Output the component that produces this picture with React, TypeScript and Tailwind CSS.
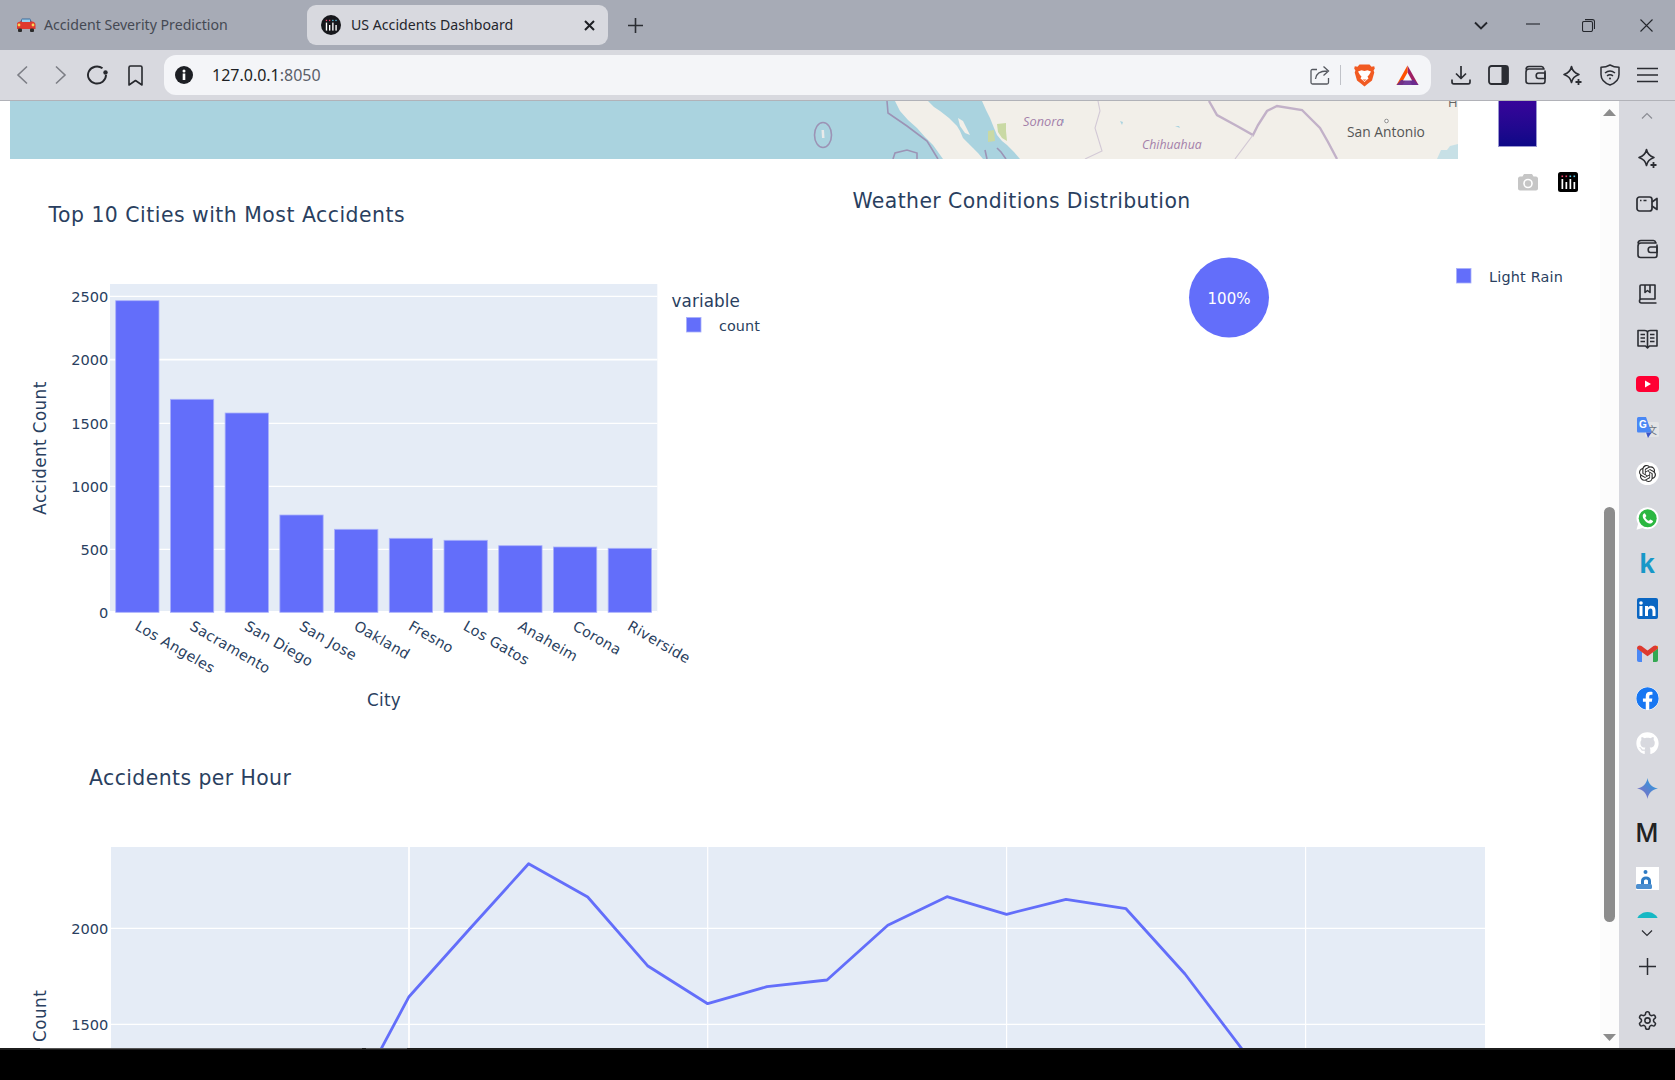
import React from "react";
import { FaFacebook, FaGithub } from "react-icons/fa";
import { SiOpenai } from "react-icons/si";

const BAR = "#636efa";
const cities = ["Los Angeles","Sacramento","San Diego","San Jose","Oakland","Fresno","Los Gatos","Anaheim","Corona","Riverside"];
const barTops = [300.7,399.3,413,515,529.3,538.3,540.3,545.7,547,548.3];
const yTicks: [string, number][] = [["2500",296.3],["2000",359.7],["1500",423.3],["1000",486.3],["500",549.3],["0",612.3]];
const linePts = "349,1109 409,996.7 468.7,930 528.6,863.7 587.7,897 647.5,965.7 707.7,1003.7 767,986.7 827,980 887.8,925.3 947,896.7 1006.6,914.3 1066,899.3 1126,908.7 1185,974 1245,1053";

function Star({ size = 21 }: { size?: number }) {
  return (
    <svg width={size} height={size} viewBox="0 0 21 21" fill="none" stroke="#2b2d33" strokeWidth="1.6" strokeLinejoin="round">
      <path d="M9.5 1.5C10.3 5.6 12.6 8 17 9.5 12.6 11 10.3 13.4 9.5 17.5 8.7 13.4 6.4 11 2 9.5 6.4 8 8.7 5.6 9.5 1.5Z" />
      <path d="M16.5 14v6M13.5 17h6" strokeWidth="1.8" />
    </svg>
  );
}

function WalletIcon() {
  return (
    <svg width="21" height="20" viewBox="0 0 21 20" fill="none" stroke="#2b2d33" strokeWidth="1.6" strokeLinejoin="round">
      <path d="M1 4.5C1 2.5 2 1.5 4 1.5H16.5C18 1.5 18.5 2.5 19 4H4C2 4 1 5 1 7V16C1 17.5 2 18.5 3.5 18.5H18C19.5 18.5 20 17.5 20 16V5.5" />
      <path d="M20 8H13.5C12 8 11.2 9 11.2 10.7S12 13.5 13.5 13.5H20Z" />
    </svg>
  );
}

function PlotlyBars() {
  return (
    <g>
      {[3.5, 7.5, 11.5, 15.5].map((x, i) => (
        <g key={x}>
          <rect x={x} y="3.5" width="1.6" height="1.6" fill={i < 2 ? "#ef476f" : "#5cc8e8"} />
          <rect x={x} y={i % 2 ? 10 : 7} width="1.7" height={i % 2 ? 7 : 10} fill="#fff" />
        </g>
      ))}
    </g>
  );
}

function Car() {
  return (
    <svg width="20" height="16" viewBox="0 0 20 16">
      <path d="M4 5 6 1.5H14L16 5Z" fill="#3d6d9c" />
      <path d="M1 7C1 5.5 2.5 4.5 5 4.5H16C18 4.5 19.5 6 19.5 8V12H1Z" fill="#e0392e" />
      <rect x="6" y="2.5" width="8" height="2.5" fill="#9bd0ee" />
      <circle cx="3" cy="8" r="1.4" fill="#f7d658" />
      <circle cx="17" cy="8" r="1.4" fill="#f7d658" />
      <rect x="2" y="11.5" width="4" height="3.5" rx="1" fill="#2b2b2b" />
      <rect x="14" y="11.5" width="4" height="3.5" rx="1" fill="#2b2b2b" />
    </svg>
  );
}

function Brave() {
  return (
    <svg width="21" height="23" viewBox="0 0 21 23">
      <path d="M5.5 0.5H15.5L17.5 2.8 20.2 2.2 20.8 4.5 19.6 6.5 20.3 8.5 18 16.5 13.5 20 10.5 22.5 7.5 20 3 16.5 0.7 8.5 1.4 6.5 0.2 4.5 0.8 2.2 3.5 2.8Z" fill="#f15a22" />
      <path d="M4 7.5 7.5 6.2 10.5 7 13.5 6.2 17 7.5 15 11 13.5 12.5 14.5 14.5 12 16.5 10.5 18 9 16.5 6.5 14.5 7.5 12.5 6 11Z" fill="#fff" />
      <path d="M8.5 15.5H12.5L10.5 17Z" fill="#f15a22" />
    </svg>
  );
}

function Bat() {
  return (
    <svg width="23" height="21" viewBox="0 0 23 21">
      <path d="M11.5 0.5 22.5 20H16L11.5 12Z" fill="#9e1f63" />
      <path d="M11.5 0.5 0.5 20H6.5L11.5 12Z" fill="#ff5000" />
      <path d="M0.5 20 5 15 18 15 22.5 20Z" fill="#662d91" opacity="0.92" />
      <path d="M11.5 7.5 16 15.5H7Z" fill="#f4f5f8" />
    </svg>
  );
}

function GTranslate() {
  return (
    <svg width="23" height="23" viewBox="0 0 23 23">
      <rect x="9" y="5" width="14" height="15" rx="1.5" fill="#e3e4e6" />
      <text x="16" y="17" textAnchor="middle" fill="#6a7280" className="font-['Noto_Sans_CJK_SC'] text-[10px]">文</text>
      <path d="M1 1.5C1 0.8 1.6 0 2.5 0H10L15.5 15.5H2.5C1.6 15.5 1 15 1 14Z" fill="#4a88f5" />
      <path d="M10 15.5H15.5L12 21Z" fill="#3c55c8" />
      <text x="7" y="11" textAnchor="middle" fill="#fff" className="font-['Liberation_Sans'] font-bold text-[10px]">G</text>
    </svg>
  );
}

function Gmail() {
  return (
    <svg width="21" height="17" viewBox="0 0 21 17">
      <path d="M0 3V15C0 16 .7 17 2 17H5V7Z" fill="#4a88f5" />
      <path d="M21 3V15C21 16 20.3 17 19 17H16V7Z" fill="#34a853" />
      <path d="M16 2 21 0.8V3.5L16 7Z" fill="#fbbc04" />
      <path d="M0 3.5C0 1 2.5-.5 4.5 1L10.5 5.5 16.5 1C18.5-.5 21 1 21 3.5L16 7.2 10.5 11.2 5 7.2Z" fill="#dd3a30" />
    </svg>
  );
}

function WhatsApp() {
  return (
    <svg width="23" height="23" viewBox="0 0 23 23">
      <path d="M11.5.3a11 11 0 0 1 0 22c-1.800 0-3.500-.4-5-1.200L.5 22.700l1.600-5.800a11 11 0 0 1 9.400-16.600Z" fill="#fff" />
      <circle cx="11.700" cy="11.300" r="9" fill="#2bb741" />
      <path d="M8.500 6.200c-.5 0-1.700.9-1.800 2.600-.1 2 1.300 4 3 5.600 1.800 1.600 3.700 2.400 5.200 2 1.300-.3 2.300-1.500 2.200-2.300-.1-.4-2.300-1.600-2.800-1.600-.5.100-1 1.300-1.500 1.300-1 0-3.300-2.300-3.500-3.300 0-.5 1-1.100 1-1.600S9 6.200 8.500 6.200Z" fill="#fff" />
    </svg>
  );
}

function SideItem({ children }: { children: React.ReactNode }) {
  return <div className="h-[45px] w-full shrink-0 flex items-center justify-center">{children}</div>;
}

function Sidebar() {
  return (
    <div className="w-[56px] h-full bg-[#d8d9df] flex flex-col items-center">
      <div className="h-[30px] flex items-center">
        <svg width="12" height="8" viewBox="0 0 12 8" fill="none" stroke="#8b8d94" strokeWidth="1.2"><path d="M1 6.500 6 1.500l5 5" /></svg>
      </div>
      <div className="mt-[5px] h-[782px] w-full overflow-hidden flex flex-col">
        <SideItem><Star /></SideItem>
        <SideItem>
          <svg width="22" height="16" viewBox="0 0 22 16" fill="none" stroke="#2b2d33" strokeWidth="1.7" strokeLinejoin="round">
            <rect x="1" y="1" width="15" height="14" rx="2.500" />
            <path d="M16 6l5-3.500v11L16 10" />
            <path d="M4 4.500h1.500M7.500 4.500h3" strokeWidth="1.400" />
          </svg>
        </SideItem>
        <SideItem><WalletIcon /></SideItem>
        <SideItem>
          <svg width="19" height="20" viewBox="0 0 19 20" fill="none" stroke="#2b2d33" strokeWidth="1.600" strokeLinejoin="round">
            <path d="M2 16V2C2 1.300 2.500 1 3 1H17V15H3.500C2.500 15 1.500 15.700 1.500 17S2.500 19 3.500 19H18.500" />
            <path d="M7 1V8.500L9.500 6.500 12 8.500V1" />
          </svg>
        </SideItem>
        <SideItem>
          <svg width="21" height="20" viewBox="0 0 21 20" fill="none" stroke="#2b2d33" strokeWidth="1.600" strokeLinejoin="round">
            <path d="M1 1.500H7.500C9 1.500 10.500 2 10.500 3.500 10.500 2 12 1.500 13.500 1.500H20V17H12.500L10.500 19 8.500 17H1ZM10.500 3.500V18" />
            <path d="M3.500 5.500H8M3.500 9H8M3.500 12.500H8M13 5.500H17.500M13 9H17.500M13 12.500H17.500" strokeWidth="1.400" />
          </svg>
        </SideItem>
        <SideItem>
          <svg width="23" height="16" viewBox="0 0 23 16"><rect width="23" height="16" rx="4" fill="#ff0033" /><path d="M9 4.500v7l6-3.500Z" fill="#fff" /></svg>
        </SideItem>
        <SideItem><GTranslate /></SideItem>
        <SideItem>
          <div className="w-[23px] h-[23px] rounded-full bg-white flex items-center justify-center">
            <SiOpenai size={17} color="#2a2a2a" />
          </div>
        </SideItem>
        <SideItem><WhatsApp /></SideItem>
        <SideItem><span className="font-['Liberation_Sans'] font-bold text-[28px] leading-none text-[#1798c8]">k</span></SideItem>
        <SideItem>
          <div className="w-[21px] h-[21px] rounded-[2px] bg-[#0a66c2] flex items-center justify-center">
            <svg width="17" height="15" viewBox="0 0 17 15" fill="#fff"><circle cx="2" cy="2" r="1.800" /><rect x=".5" y="5" width="3" height="10" /><path d="M6 5h3v1.400C9.700 5.400 10.800 4.800 12.300 4.800 15.300 4.800 16.500 6.700 16.500 9.800V15h-3V10.300C13.500 8.700 13 7.500 11.500 7.500S9 8.700 9 10.300V15H6Z" /></svg>
          </div>
        </SideItem>
        <SideItem><Gmail /></SideItem>
        <SideItem><FaFacebook size={23} color="#1877f2" className="bg-white rounded-full" /></SideItem>
        <SideItem><FaGithub size={23} color="#ffffff" /></SideItem>
        <SideItem>
          <svg width="21" height="21" viewBox="0 0 21 21">
            <defs>
              <linearGradient id="gem" x1="0" y1="1" x2="1" y2="0">
                <stop offset="0" stopColor="#9168c0" />
                <stop offset="0.5" stopColor="#5684d1" />
                <stop offset="1" stopColor="#1ba1e3" />
              </linearGradient>
            </defs>
            <path d="M10.500 0C11.300 5.500 15 9.500 21 10.500 15 11.500 11.300 15.500 10.500 21 9.700 15.500 6 11.500 0 10.500 6 9.500 9.700 5.500 10.500 0Z" fill="url(#gem)" />
          </svg>
        </SideItem>
        <SideItem><span className="font-['Inter'] font-medium text-[25px] leading-none text-[#222]">M</span></SideItem>
        <SideItem>
          <div className="w-[23px] h-[23px] bg-white">
            <svg width="23" height="23" viewBox="0 0 23 23">
              <circle cx="9.500" cy="5" r="2" fill="#2f7cc4" />
              <path d="M5 17V14C5 11 7 9.500 10 9.500S15 11 15 14V17H12V14C12 13 11 12.500 10 12.500S8 13 8 14V17Z" fill="#2f7cc4" />
              <rect y="17" width="16" height="5" rx="1.500" fill="#4c8fd0" />
            </svg>
          </div>
        </SideItem>
        <SideItem><div className="w-[23px] h-[23px] rounded-full bg-[#16b8c4]" /></SideItem>
      </div>
      <div className="h-[30px] flex items-center">
        <svg width="12" height="8" viewBox="0 0 12 8" fill="none" stroke="#2b2d33" strokeWidth="1.200"><path d="M1 1.500l5 5 5-5" /></svg>
      </div>
      <div className="h-[36px] flex items-center">
        <svg width="17" height="17" viewBox="0 0 17 17" stroke="#2b2d33" strokeWidth="1.500"><path d="M8.500 0v17M0 8.500h17" /></svg>
      </div>
      <div className="flex-1 pt-[8px] flex items-center">
        <svg width="21" height="21" viewBox="0 0 24 24" fill="none" stroke="#2b2d33" strokeWidth="1.800" strokeLinejoin="round">
          <path d="M12.220 2h-.44a2 2 0 0 0-2 2v.18a2 2 0 0 1-1 1.730l-.43.25a2 2 0 0 1-2 0l-.15-.08a2 2 0 0 0-2.730.73l-.22.380a2 2 0 0 0 .730 2.730l.150.100a2 2 0 0 1 1 1.720v.510a2 2 0 0 1-1 1.740l-.150.090a2 2 0 0 0-.730 2.730l.220.380a2 2 0 0 0 2.730.730l.150-.080a2 2 0 0 1 2 0l.430.250a2 2 0 0 1 1 1.730V20a2 2 0 0 0 2 2h.440a2 2 0 0 0 2-2v-.180a2 2 0 0 1 1-1.730l.430-.250a2 2 0 0 1 2 0l.150.080a2 2 0 0 0 2.730-.730l.220-.390a2 2 0 0 0-.730-2.730l-.150-.080a2 2 0 0 1-1-1.740v-.500a2 2 0 0 1 1-1.740l.150-.090a2 2 0 0 0 .730-2.730l-.220-.380a2 2 0 0 0-2.730-.730l-.150.080a2 2 0 0 1-2 0l-.430-.250a2 2 0 0 1-1-1.730V4a2 2 0 0 0-2-2Z" />
          <circle cx="12" cy="12" r="3" />
        </svg>
      </div>
    </div>
  );
}

function Scrollbar() {
  return (
    <div className="w-[19px] h-full bg-[#fcfcfc] flex flex-col">
      <div className="h-[405.5px] pt-[8px] pl-[3px]">
        <svg width="13" height="7" viewBox="0 0 13 7" className="block"><path d="M6.500 0 13 7H0Z" fill="#8c8c8c" /></svg>
      </div>
      <div className="ml-[4px] w-[11px] h-[415px] rounded-[6px] bg-[#8c8c8c]" />
      <div className="flex-1 flex flex-col justify-end pb-[7px] pl-[3px]">
        <svg width="13" height="7" viewBox="0 0 13 7" className="block"><path d="M6.500 7 13 0H0Z" fill="#8c8c8c" /></svg>
      </div>
    </div>
  );
}

function MapStrip() {
  return (
    <svg width="1448" height="58" viewBox="10 101 1448 58" className="block">
      <rect x="10" y="101" width="1448" height="58" fill="#aad3df" />
      <g className="blur-[0.6px]">
        <path d="M982 101L986 110 990 118 994 128 997 135 1002 141 1007 145 1014 152 1020 159H1458V101Z" fill="#f2efe9" />
        <path d="M895 101L900 111 908 120 917 128 925 137 933 145 943 159H983L978 153 973 148 968 143 963 138 960 131 957 126 949 118 940 111 934 107 928 101Z" fill="#f2efe9" />
        <path d="M958 118L963 121 968 131 970 135 965 133 960 126Z" fill="#f2efe9" />
        <path d="M988 131L994 130 995 141 988 142Z" fill="#c9d9a4" />
        <path d="M997 124L1006 123 1006 131 1007 141 1002 138 998 132Z" fill="#c9d9a4" />
        <path d="M1437 159L1441 150 1447 150 1450 146 1458 144V159Z" fill="#c7e0e6" />
        <g fill="none" stroke="#9c93b5" strokeWidth="1.600">
          <path d="M887 101L888 113 907 126 927 141 938 159" />
          <ellipse cx="823" cy="135" rx="8.500" ry="12.500" />
          <path d="M893 159L895 153 907 150 917 153 917 159" />
          <path d="M985 150L987 159M997 148L1001 152 1006 159" />
        </g>
        <path d="M821.500 130h2.500l.5 8h-2.500Z" fill="#e8eaea" />
        <path d="M1098 101L1100 111 1095 128 1102 151 1085 159" fill="none" stroke="#d3c9d6" strokeWidth="1.100" />
        <path d="M1209 101L1217 115 1237 126 1253 135 1258 125 1267 111 1277 106 1302 110 1320 128 1328 142 1337 159" fill="none" stroke="#c2b1c8" strokeWidth="2.400" />
        <path d="M1253 135L1235 159" fill="none" stroke="#d2c8d4" strokeWidth="1.200" />
        <path d="M1120 121l2 4 1-3ZM1062 119h2v4h-2ZM1175 126l5 2-1-2ZM1061 127l4 2" fill="#aad3df" />
      </g>
      <g className="font-['Open_Sans'] italic font-medium" fill="#a47fa9">
        <text x="1023" y="125.500" className="text-[12.800px]">Sonora</text>
        <text x="1142" y="149" className="text-[12.300px]">Chihuahua</text>
      </g>
      <circle cx="1386.500" cy="121" r="1.800" fill="#fff" stroke="#666" strokeWidth="0.700" />
      <text x="1347" y="137" fill="#555" className="font-['Open_Sans'] text-[13.800px]">San Antonio</text>
      <text x="1448" y="106.500" fill="#666" className="font-['Open_Sans'] text-[13px]">H</text>
    </svg>
  );
}

function BarChart() {
  return (
    <svg width="800" height="581" viewBox="0 159 800 581" className="block shrink-0 font-['DejaVu_Sans',sans-serif]">
      <text x="48.500" y="222" fill="#2a3f5f" className="text-[20.400px] tracking-[0.5px]">Top 10 Cities with Most Accidents</text>
      <rect x="110" y="284" width="547.300" height="328.300" fill="#e5ecf6" />
      {yTicks.map(([label, y]) => (
        <g key={label}>
          <line x1="110" x2="657.300" y1={y} y2={y} stroke="#fff" strokeWidth={label === "0" ? 2.400 : label === "2000" ? 1.800 : 1.200} />
          <text x="108.300" y={y + 5.300} textAnchor="end" fill="#2a3f5f" className="text-[14.600px]">{label}</text>
        </g>
      ))}
      {barTops.map((top, i) => (
        <rect key={i} x={115.700 + i * 54.720} y={top} width="43.300" height={612.300 - top} fill={BAR} stroke="#a9b0fb" strokeWidth="0.800" />
      ))}
      {cities.map((c, i) => (
        <text key={c} transform={`translate(${134 + i * 54.720} 629) rotate(30)`} fill="#2a3f5f" className="text-[14.400px] tracking-[0.3px]">{c}</text>
      ))}
      <text x="384" y="706" textAnchor="middle" fill="#2a3f5f" className="text-[16.800px] tracking-[0.3px]">City</text>
      <text transform="translate(46 448) rotate(-90)" textAnchor="middle" fill="#2a3f5f" className="text-[16.800px] tracking-[0.4px]">Accident Count</text>
      <text x="671.500" y="306.500" fill="#2a3f5f" className="text-[16.800px] tracking-[0.1px]">variable</text>
      <rect x="686.500" y="317.500" width="14.500" height="14.500" fill={BAR} stroke="#a9b0fb" strokeWidth="0.800" />
      <text x="719" y="331" fill="#2a3f5f" className="text-[14.400px] tracking-[0.05px]">count</text>
    </svg>
  );
}

function PieChart() {
  return (
    <svg width="800" height="581" viewBox="800 159 800 581" className="block shrink-0 font-['DejaVu_Sans',sans-serif]">
      <text x="852.500" y="208" fill="#2a3f5f" className="text-[20.400px] tracking-[0.4px]">Weather Conditions Distribution</text>
      <circle cx="1229" cy="297.500" r="40" fill={BAR} />
      <text x="1229" y="304" textAnchor="middle" fill="#fff" className="text-[15px]">100%</text>
      <rect x="1456.500" y="268.500" width="14.500" height="14.500" fill={BAR} stroke="#a9b0fb" strokeWidth="0.800" />
      <text x="1489" y="282" fill="#2a3f5f" className="text-[14.400px] tracking-[0.2px]">Light Rain</text>
      <g transform="translate(1518 173.500)" fill="#c6c6c6">
        <path d="M6 0.500H14L15.500 3H18C19 3 20 4 20 5V15C20 16 19 17 18 17H2C1 17 0 16 0 15V5C0 4 1 3 2 3H4.500Z" />
        <circle cx="10" cy="10" r="4.800" fill="#fff" />
        <circle cx="10" cy="10" r="3.200" />
      </g>
      <g transform="translate(1558 172)">
        <rect width="20" height="20" rx="2.500" fill="#000" />
        <PlotlyBars />
      </g>
    </svg>
  );
}

function LineChart() {
  return (
    <svg width="1600" height="308" viewBox="0 740 1600 308" className="block shrink-0 font-['DejaVu_Sans',sans-serif]">
      <text x="89" y="785" fill="#2a3f5f" className="text-[20.400px] tracking-[0.42px]">Accidents per Hour</text>
      <rect x="111" y="847" width="1374" height="201" fill="#e5ecf6" />
      {[928.300, 1024.300].map((y) => (
        <line key={y} x1="111" x2="1485" y1={y} y2={y} stroke="#fff" strokeWidth="1.300" />
      ))}
      {[409, 707.700, 1006.600, 1305.600].map((x, i) => (
        <line key={x} x1={x} x2={x} y1="847" y2="1048" stroke="#fff" strokeWidth={i === 0 ? 1.800 : 1.200} />
      ))}
      <polyline points={linePts} fill="none" stroke={BAR} strokeWidth="2.800" strokeLinejoin="round" />
      <text x="108.300" y="933.500" textAnchor="end" fill="#2a3f5f" className="text-[14.600px]">2000</text>
      <text x="108.300" y="1029.500" textAnchor="end" fill="#2a3f5f" className="text-[14.600px]">1500</text>
      <text transform="translate(46 1042) rotate(-90)" fill="#2a3f5f" className="text-[16.800px] tracking-[0.5px]">Count</text>
    </svg>
  );
}

export default function App() {
  return (
    <div className="w-[1675px] h-[1080px] overflow-hidden bg-black flex flex-col font-['Noto_Sans',sans-serif]">
      {/* tab strip */}
      <div className="h-[50px] shrink-0 bg-[#a7abb6] flex items-center">
        <div className="w-[307px] pl-[16px] flex items-center">
          <Car />
          <span className="ml-[8px] text-[14.150px] text-[#454953]">Accident Severity Prediction</span>
        </div>
        <div className="w-[301px] h-[40px] rounded-[9px] bg-[#d8d9df] flex items-center pl-[14px]">
          <svg width="20" height="20" viewBox="0 0 20 20" className="shrink-0">
            <circle cx="10" cy="10" r="10" fill="#16171b" />
            <g transform="translate(2 2) scale(0.8)"><PlotlyBars /></g>
          </svg>
          <span className="ml-[10px] text-[14.150px] text-[#24262c]">US Accidents Dashboard</span>
          <svg width="11" height="11" viewBox="0 0 11 11" stroke="#1d1f24" strokeWidth="2" className="ml-auto mr-[13px]"><path d="M1 1l9 9M10 1l-9 9" /></svg>
        </div>
        <svg width="15" height="15" viewBox="0 0 15 15" stroke="#2b2d33" strokeWidth="1.600" className="ml-[20px]"><path d="M7.500 0v15M0 7.500h15" /></svg>
        <svg width="14" height="9" viewBox="0 0 14 9" fill="none" stroke="#24262c" strokeWidth="1.900" className="ml-[831px]"><path d="M1 1.500l6 6 6-6" /></svg>
        <svg width="14" height="2" viewBox="0 0 14 2" stroke="#24262c" strokeWidth="1.100" className="ml-[38px] mb-[3px]"><path d="M0 1h14" /></svg>
        <svg width="13" height="13" viewBox="0 0 13 13" fill="none" stroke="#24262c" strokeWidth="1.100" className="ml-[42px]"><rect x=".5" y="2.500" width="10" height="10" rx="1.500" /><path d="M3 .6h7.500c1.200 0 2 .8 2 2V10" /></svg>
        <svg width="13" height="13" viewBox="0 0 13 13" stroke="#24262c" strokeWidth="1.100" className="ml-[45px]"><path d="M.5.5l12 12M12.500.5l-12 12" /></svg>
      </div>

      {/* toolbar */}
      <div className="h-[51px] shrink-0 bg-[#d8d9df] border-b border-[#b1b2b8] flex items-center">
        <svg width="13" height="20" viewBox="0 0 13 20" fill="none" stroke="#7c7e85" strokeWidth="1.600" className="ml-[16px]"><path d="M11 1.500 2 10l9 8.500" /></svg>
        <svg width="13" height="20" viewBox="0 0 13 20" fill="none" stroke="#7c7e85" strokeWidth="1.600" className="ml-[25px]"><path d="M2 1.500 11 10l-9 8.500" /></svg>
        <svg width="21" height="20" viewBox="0 0 21 20" fill="none" stroke="#26282d" strokeWidth="1.900" className="ml-[20px]">
          <path d="M19 10a9 8.500 0 1 1-3.500-6.700" />
          <circle cx="18.500" cy="7.500" r="2.200" fill="#26282d" stroke="none" />
        </svg>
        <svg width="15" height="21" viewBox="0 0 15 21" fill="none" stroke="#26282d" strokeWidth="1.600" strokeLinejoin="round" className="ml-[20px]"><path d="M1 2.500C1 1.500 1.700 1 2.500 1h10c.8 0 1.500.5 1.500 1.500V20L7.500 15.500 1 20Z" /></svg>
        <div className="ml-[21px] w-[1267px] h-[40px] rounded-[12px] bg-[#f4f5f8] flex items-center">
          <svg width="18" height="18" viewBox="0 0 18 18" className="ml-[11px]">
            <circle cx="9" cy="9" r="9" fill="#1d1f24" />
            <rect x="7.700" y="7.500" width="2.600" height="6.500" fill="#fff" />
            <circle cx="9" cy="5" r="1.500" fill="#fff" />
          </svg>
          <span className="ml-[19px] text-[16px] text-[#1d1f24]">127.0.0.1<span className="text-[#5b5f69]">:8050</span></span>
          <svg width="20" height="20" viewBox="0 0 20 20" fill="none" stroke="#55585f" strokeWidth="1.300" className="ml-auto">
            <path d="M7 4.500H2.500C1.500 4.500 1 5 1 6V17.500C1 18.500 1.500 19 2.500 19H17C18 19 18.500 18.500 18.500 17.500V13" />
            <path d="M5.500 14C6 9 9.500 6 17 6M13.500 1.500 18.500 6l-5 4.500" />
          </svg>
          <div className="ml-[10px] w-[1px] h-[20px] bg-[#c0c2c8]" />
          <div className="ml-[13px] flex"><Brave /></div>
          <div className="ml-[21px] mr-[12px] flex"><Bat /></div>
        </div>
        <svg width="20" height="20" viewBox="0 0 20 20" fill="none" stroke="#2b2d33" strokeWidth="1.700" strokeLinejoin="round" className="ml-[20px]">
          <path d="M10 1v12M5 8.500 10 13.500 15 8.500" />
          <path d="M1 14.500V17C1 18 1.700 18.800 2.700 18.800H17.300C18.300 18.800 19 18 19 17V14.500" />
        </svg>
        <svg width="21" height="20" viewBox="0 0 21 20" className="ml-[17px]">
          <rect x="1" y="1" width="19" height="18" rx="2.500" fill="none" stroke="#2b2d33" strokeWidth="1.800" />
          <path d="M13.500 1H17.500C19 1 20 2 20 3.500V16.500C20 18 19 19 17.500 19H13.500Z" fill="#2b2d33" />
        </svg>
        <div className="ml-[16px] flex"><WalletIcon /></div>
        <div className="ml-[16px] flex"><Star /></div>
        <svg width="20" height="22" viewBox="0 0 20 22" fill="none" stroke="#2b2d33" strokeWidth="1.500" strokeLinejoin="round" className="ml-[17px]">
          <path d="M10 1C13 2.800 16 3.300 19 3.300V10.500C19 15.500 15.500 19 10 21 4.500 19 1 15.500 1 10.500V3.300C4 3.300 7 2.800 10 1Z" />
          <path d="M5 9C8 6.500 12 6.500 15 9M7 11.800C9 10.300 11 10.300 13 11.800" />
          <circle cx="10" cy="14.500" r="1" fill="#2b2d33" stroke="none" />
        </svg>
        <svg width="21" height="16" viewBox="0 0 21 16" stroke="#2b2d33" strokeWidth="1.700" className="ml-[17px]"><path d="M0 1.500h21M0 8h21M0 14.500h21" /></svg>
      </div>

      {/* page + scrollbar + sidebar */}
      <div className="h-[947px] shrink-0 flex bg-white">
        <div className="w-[1600px] h-full overflow-hidden flex flex-col">
          <div className="h-[58px] shrink-0 flex items-start pl-[10px]">
            <MapStrip />
            <div className="ml-[40px] w-[39px] h-[45.500px] border-x border-b border-[#9a97d0] bg-gradient-to-b from-[#37049a] to-[#0d0887]" />
          </div>
          <div className="h-[581px] shrink-0 flex">
            <BarChart />
            <PieChart />
          </div>
          <LineChart />
        </div>
        <Scrollbar />
        <Sidebar />
      </div>

      {/* taskbar edge */}
      <div className="h-[2px] shrink-0 bg-[#1c1c1c] flex">
        <div className="ml-[40px] w-[322px] h-[1px] bg-[#555]" />
        <div className="ml-[4px] w-[41px] h-[1px] bg-[#555]" />
      </div>
    </div>
  );
}
